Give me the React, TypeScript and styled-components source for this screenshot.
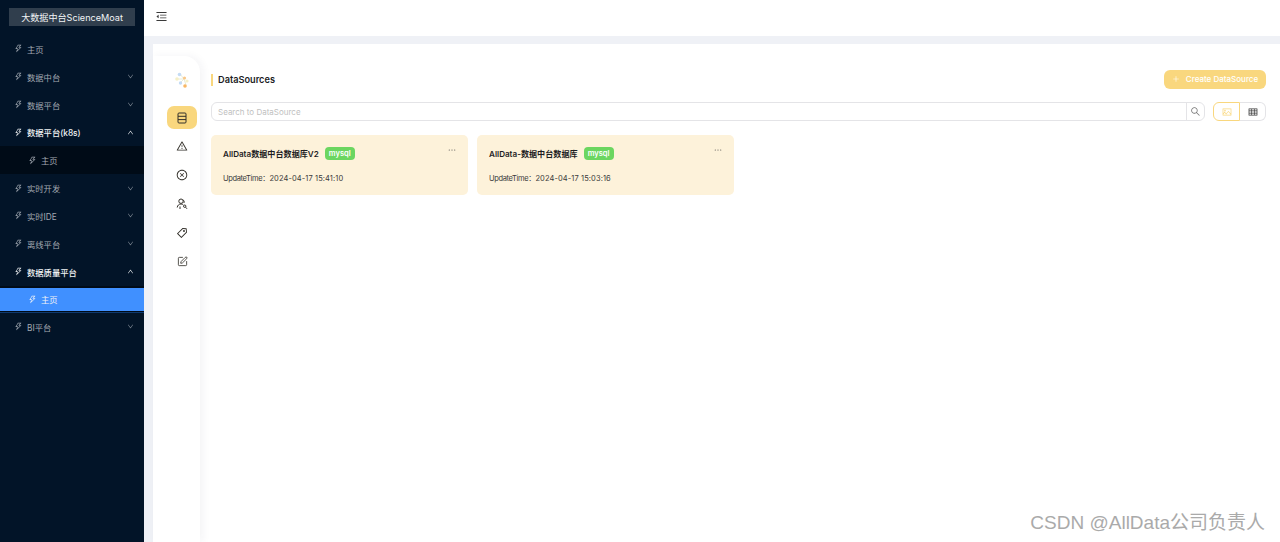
import React from "react";
import styled, { createGlobalStyle } from "styled-components";
import {
  AiOutlineThunderbolt, AiOutlineDown, AiOutlineUp, AiOutlineMenuFold, AiOutlineSearch,
  AiOutlineTable, AiOutlinePicture, AiOutlineWarning, AiOutlineCloseCircle, AiOutlineTag,
  AiOutlineEllipsis, AiOutlinePlus,
} from "react-icons/ai";
import { SquarePen } from "lucide-react";

const FONT = `Inter, "Noto Sans CJK SC", "Noto Sans", sans-serif`;

const Global = createGlobalStyle`
  html, body { margin: 0; padding: 0; height: 100%; overflow: hidden; background: #fff; }
  body { font-family: ${FONT}; }
  #root { height: 100%; }
  * { box-sizing: border-box; }
`;

const Layout = styled.div`
  display: flex;
  width: 1280px;
  height: 542px;
  position: relative;
  overflow: hidden;
`;

const Sider = styled.aside`
  width: 144px;
  flex: none;
  background: #021428;
  display: flex;
  flex-direction: column;
`;

const LogoBox = styled.div`
  margin: 8px 9px 9px;
  height: 18px;
  background: #303e4d;
  color: #f2f4f6;
  font-size: 9.1px;
  line-height: 19px;
  text-align: center;
  white-space: nowrap;
`;

const Menu = styled.nav`
  display: flex;
  flex-direction: column;
`;

const MenuItem = styled.div<{ $open?: boolean; $sub?: boolean; $selected?: boolean }>`
  height: ${(p) => (p.$selected ? "23px" : "27.85px")};
  display: flex;
  align-items: center;
  gap: 4px;
  padding: 0 10px 0 ${(p) => (p.$sub ? "28px" : "14px")};
  font-size: 8.3px;
  white-space: nowrap;
  color: ${(p) => (p.$open || p.$selected ? "#f1f3f5" : "#a2a9b2")};
  background: ${(p) => (p.$selected ? "#4090ff" : "transparent")};
  font-weight: ${(p) => (p.$open ? 500 : 400)};
`;

const SubMenu = styled.div<{ $active?: boolean }>`
  background: #000b17;
  ${(p) => (p.$active ? "padding: 2px 0 1px; border-bottom: 1px solid #0f3a70;" : "")}
  display: flex;
  flex-direction: column;
`;

const MenuLabel = styled.span`
  flex: 1;
`;

const Main = styled.div`
  flex: 1;
  min-width: 0;
  display: flex;
  flex-direction: column;
  background: #eff1f6;
`;

const Header = styled.header`
  height: 36px;
  flex: none;
  background: #fff;
  display: flex;
  align-items: center;
  padding: 0 0 4px 11px;
  color: #3a3a3a;
  font-size: 13px;
`;

const Body = styled.div`
  flex: 1;
  margin: 8px 0 0 9px;
  background: #fff;
  display: flex;
  min-height: 0;
`;

const Rail = styled.div`
  width: 47px;
  flex: none;
  margin-top: 12px;
  border-top-right-radius: 16px;
  box-shadow: 3px 0 8px rgba(30, 40, 70, 0.05);
  display: flex;
  flex-direction: column;
  align-items: center;
  padding: 0 0 0 11px;
`;

const RailLogo = styled.div`
  height: 20px;
  margin-top: 16px;
  margin-bottom: 14px;
  display: flex;
`;

const RailButton = styled.div<{ $active?: boolean }>`
  width: 30px;
  height: 23px;
  margin-bottom: 5.85px;
  border-radius: 7px;
  display: flex;
  align-items: center;
  justify-content: center;
  color: #33302a;
  font-size: 12px;
  background: ${(p) => (p.$active ? "#f9d77e" : "transparent")};
`;

const Content = styled.main`
  flex: 1;
  min-width: 0;
  padding: 25px 14px 0 11px;
`;

const TitleRow = styled.div`
  display: flex;
  align-items: center;
  justify-content: space-between;
  height: 20px;
`;

const Title = styled.h1`
  margin: 1px 0 0;
  border-left: 2px solid #f9d77e;
  padding-left: 5px;
  height: 12px;
  line-height: 12px;
  font-size: 9.2px;
  font-weight: 600;
  color: #1d1d1f;
`;

const CreateButton = styled.button`
  width: 102px;
  height: 19px;
  border: 0;
  border-radius: 6px;
  background: #f9d77e;
  color: #fff;
  font: 500 8px ${FONT};
  display: flex;
  align-items: center;
  justify-content: center;
  gap: 6px;
  padding: 0;
`;

const SearchRow = styled.div`
  display: flex;
  align-items: center;
  margin-top: 13px;
  gap: 8px;
`;

const SearchBox = styled.div`
  flex: 1;
  height: 19px;
  border: 1px solid #e4e4e7;
  border-radius: 6px;
  display: flex;
  align-items: center;
  font-size: 8px;
  color: #bfbfbf;
`;

const SearchText = styled.span`
  flex: 1;
  padding-left: 6px;
`;

const SearchButton = styled.div`
  width: 18px;
  height: 100%;
  border-left: 1px solid #e4e4e7;
  display: flex;
  align-items: center;
  justify-content: center;
  color: #777;
  font-size: 11px;
`;

const ViewSwitch = styled.div`
  display: flex;
  height: 19px;
  width: 53px;
`;

const ViewOption = styled.div<{ $active?: boolean; $side: "l" | "r" }>`
  flex: 1;
  display: flex;
  align-items: center;
  justify-content: center;
  font-size: 10px;
  border: 1px solid ${(p) => (p.$active ? "#f9d77e" : "#e4e4e7")};
  ${(p) => (p.$side === "l" ? "border-radius: 6px 0 0 6px;" : "border-radius: 0 6px 6px 0; border-left: 0;")}
  color: ${(p) => (p.$active ? "#f9d77e" : "#333")};
`;

const Cards = styled.div`
  display: flex;
  gap: 9px;
  margin-top: 14px;
`;

const Card = styled.article`
  width: 257px;
  height: 60px;
  border-radius: 5px;
  background: #fdf2da;
  padding: 12px 12px 0;
  position: relative;
`;

const CardHead = styled.div`
  display: flex;
  align-items: center;
  gap: 6px;
  height: 13px;
`;

const CardTitle = styled.span`
  font-size: 8.1px;
  font-weight: 600;
  color: #1d1d1f;
  white-space: nowrap;
`;

const Badge = styled.span`
  width: 30px;
  height: 13px;
  border-radius: 4px;
  background: #6bd660;
  color: #fff;
  font-size: 7.5px;
  font-weight: 600;
  line-height: 13px;
  text-align: center;
`;

const More = styled.span`
  position: absolute;
  top: 10px;
  right: 11px;
  font-size: 10px;
  line-height: 10px;
  color: #444;
`;

const CardTime = styled.div`
  margin-top: 12px;
  font-size: 7.5px;
  color: #3a3a3a;
  white-space: nowrap;
`;

const TimeLabel = styled.span`
  letter-spacing: -0.35px;
`;

const TimeValue = styled.span`
  letter-spacing: 0.1px;
`;

const Watermark = styled.div`
  position: absolute;
  right: 15px;
  bottom: 7px;
  font-family: "Liberation Sans", "Noto Sans CJK SC", sans-serif;
  font-size: 19px;
  line-height: 24px;
  color: #aaaaaa;
  white-space: nowrap;
`;

const Ic = styled(AiOutlineThunderbolt)`
  font-size: 9px;
  flex: none;
`;

const Caret = styled.span<{ $open?: boolean }>`
  display: flex;
  font-size: 7px;
  color: ${(p) => (p.$open ? "#f1f3f5" : "#8a929c")};
`;

type Entry = { label: string; arrow?: boolean; open?: boolean; sub?: string; selected?: boolean };

const entries: Entry[] = [
  { label: "主页" },
  { label: "数据中台", arrow: true },
  { label: "数据平台", arrow: true },
  { label: "数据平台(k8s)", arrow: true, open: true, sub: "主页" },
  { label: "实时开发", arrow: true },
  { label: "实时IDE", arrow: true },
  { label: "离线平台", arrow: true },
  { label: "数据质量平台", arrow: true, open: true, sub: "主页", selected: true },
  { label: "BI平台", arrow: true },
];

const LogoMark = () => (
  <svg width="14" height="18" viewBox="0 0 14 18">
    <path d="M5 2 L9 7 L5 11 M9 7 L11 13 M2 7 L9 7" stroke="#e8ecd8" strokeWidth="1" fill="none" />
    <circle cx="4.5" cy="2.5" r="1.8" fill="#c4dcf5" />
    <circle cx="9.5" cy="6" r="1.6" fill="#f9c88a" />
    <circle cx="2" cy="7" r="1.8" fill="#f5f0c8" />
    <circle cx="5.5" cy="11" r="1.7" fill="#c4dcf5" />
    <circle cx="12" cy="9" r="1.6" fill="#f5f0c8" />
    <circle cx="10" cy="14" r="1.8" fill="#f9b765" />
  </svg>
);

const DbIcon = () => (
  <svg width="10" height="12" viewBox="0 0 10 12" fill="none" stroke="currentColor" strokeWidth="1">
    <rect x="1" y="1" width="8" height="10" rx="1" />
    <path d="M1 4.3H9M1 7.6H9" />
  </svg>
);

const PeopleIcon = () => (
  <svg width="12" height="12" viewBox="0 0 12 12" fill="none" stroke="currentColor" strokeWidth="1">
    <circle cx="5" cy="3.2" r="2.2" />
    <path d="M1.2 9.5C1.5 7.3 3 6 5 6c.9 0 1.6.2 2.2.7" />
    <path d="M7 2c1.2.4 1.6 2 .8 3" />
    <circle cx="8.7" cy="8.2" r="1.2" />
    <path d="M9.6 9.2L11 10.8" />
    <path d="M4 8.5V11" />
  </svg>
);

const cards = [
  { title: "AllData数据中台数据库V2", time: "2024-04-17 15:41:10" },
  { title: "AllData-数据中台数据库", time: "2024-04-17 15:03:16" },
];

export default function App() {
  return (
    <Layout>
      <Global />
      <Sider>
        <LogoBox>大数据中台ScienceMoat</LogoBox>
        <Menu>
          {entries.map((e) => (
            <React.Fragment key={e.label}>
              <MenuItem $open={e.open}>
                <Ic />
                <MenuLabel>{e.label}</MenuLabel>
                {e.arrow && <Caret $open={e.open}>{e.open ? <AiOutlineUp /> : <AiOutlineDown />}</Caret>}
              </MenuItem>
              {e.sub && (
                <SubMenu $active={e.selected}>
                  <MenuItem $sub $selected={e.selected}>
                    <Ic />
                    <MenuLabel>{e.sub}</MenuLabel>
                  </MenuItem>
                </SubMenu>
              )}
            </React.Fragment>
          ))}
        </Menu>
      </Sider>
      <Main>
        <Header>
          <AiOutlineMenuFold />
        </Header>
        <Body>
          <Rail>
            <RailLogo><LogoMark /></RailLogo>
            <RailButton $active><DbIcon /></RailButton>
            <RailButton><AiOutlineWarning /></RailButton>
            <RailButton><AiOutlineCloseCircle /></RailButton>
            <RailButton><PeopleIcon /></RailButton>
            <RailButton><AiOutlineTag /></RailButton>
            <RailButton><SquarePen size={11} strokeWidth={1.8} /></RailButton>
          </Rail>
          <Content>
            <TitleRow>
              <Title>DataSources</Title>
              <CreateButton><AiOutlinePlus />Create DataSource</CreateButton>
            </TitleRow>
            <SearchRow>
              <SearchBox>
                <SearchText>Search to DataSource</SearchText>
                <SearchButton><AiOutlineSearch /></SearchButton>
              </SearchBox>
              <ViewSwitch>
                <ViewOption $active $side="l"><AiOutlinePicture /></ViewOption>
                <ViewOption $side="r"><AiOutlineTable /></ViewOption>
              </ViewSwitch>
            </SearchRow>
            <Cards>
              {cards.map((c) => (
                <Card key={c.title}>
                  <CardHead>
                    <CardTitle>{c.title}</CardTitle>
                    <Badge>mysql</Badge>
                  </CardHead>
                  <More><AiOutlineEllipsis /></More>
                  <CardTime><TimeLabel>UpdateTime：</TimeLabel><TimeValue>{c.time}</TimeValue></CardTime>
                </Card>
              ))}
            </Cards>
          </Content>
        </Body>
      </Main>
      <Watermark>CSDN @AllData公司负责人</Watermark>
    </Layout>
  );
}
